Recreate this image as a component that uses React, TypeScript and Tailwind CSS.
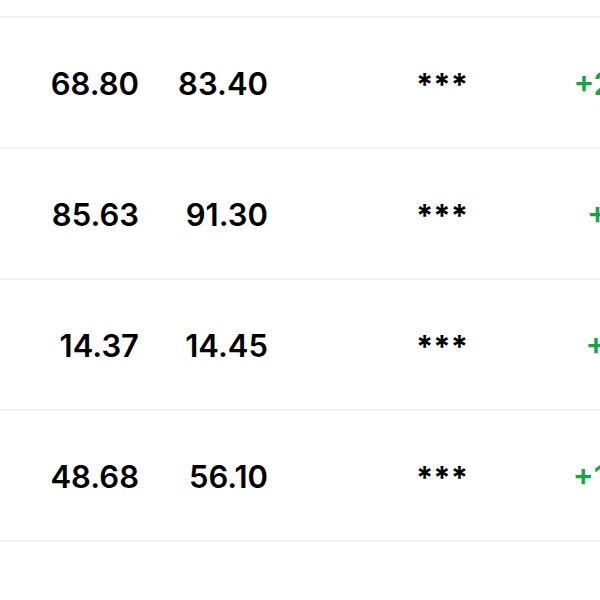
import React from "react";

const rows = [
  { a: "68.80", b: "83.40", c: "+21.23%" },
  { a: "85.63", b: "91.30", c: "+6.62%" },
  { a: "14.37", b: "14.45", c: "+0.56%" },
  { a: "48.68", b: "56.10", c: "+15.24%" },
];

export default function App() {
  return (
    <div
      className="w-[600px] h-[600px] overflow-hidden bg-white text-black"
      style={{ fontFamily: "Inter, 'Liberation Sans', sans-serif" }}
    >
      <div className="h-[16px]" />
      {rows.map((r, i) => (
        <div
          key={i}
          className="flex h-[131px] items-center border-t-2 border-[#f3f3f3] pt-[4px] text-[31px] font-semibold whitespace-nowrap"
        >
          <div className="w-[139px] shrink-0 text-right">{r.a}</div>
          <div className="w-[129px] shrink-0 text-right">{r.b}</div>
          <div className="w-[148px] shrink-0" />
          <div className="w-[60px] shrink-0 font-bold text-[31px] leading-none">***</div>
          <div className="w-[230px] shrink-0 text-right text-[#17a34a]">{r.c}</div>
        </div>
      ))}
      <div className="border-t-2 border-[#f3f3f3]" />
    </div>
  );
}
